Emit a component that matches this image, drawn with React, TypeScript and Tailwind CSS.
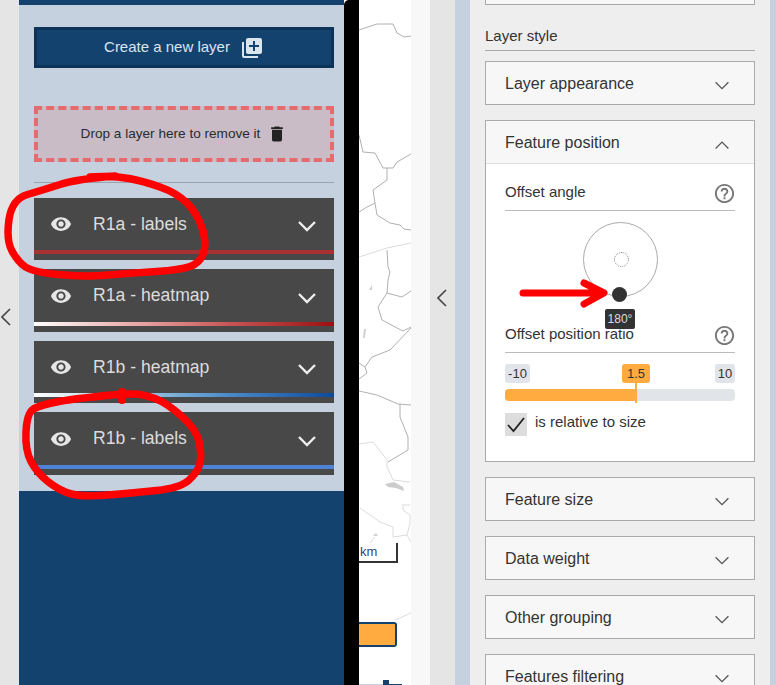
import React from 'react';
import { MdLibraryAdd, MdDelete, MdVisibility, MdHelpOutline } from 'react-icons/md';

type Pt = [number, number];

// midpoint smoothing so hand-drawn marks don't look like polygons
const smooth = (pts: Pt[]) => {
  let d = `M${pts[0][0]} ${pts[0][1]}`;
  for (let i = 1; i < pts.length - 1; i++) {
    const mx = (pts[i][0] + pts[i + 1][0]) / 2;
    const my = (pts[i][1] + pts[i + 1][1]) / 2;
    d += ` Q${pts[i][0]} ${pts[i][1]} ${mx} ${my}`;
  }
  const last = pts[pts.length - 1];
  return `${d} L${last[0]} ${last[1]}`;
};

const loopTop: Pt[] = [
  [115, 176], [77, 179], [43, 190], [12, 199], [6, 240], [18, 262], [33, 272], [83, 277], [133, 273], [180, 270],
  [200, 263], [207, 243], [197, 213], [177, 193], [143, 181], [115, 176], [90, 177],
];
const loopBottom: Pt[] = [
  [123, 394], [78, 398], [40, 405], [27, 413], [25, 450], [37, 473], [60, 491], [83, 497], [133, 493], [180, 488],
  [197, 473], [202, 457], [197, 430], [167, 403], [143, 394], [123, 394], [100, 396],
];

const borders = [
  'M359 30 L368 27 L377 24 L393 24 L397 33 L404 37 L411 36',
  'M359 135 L363 152 L375 153 L383 168 L393 168 L397 162 L411 154',
  'M387 168 L387 180 L373 190 L375 203 L367 207 L359 212',
  'M375 203 L377 215 L390 223 L400 225 L404 229 L411 230',
  'M387 250 L388 267 L390 272 L388 280 L387 293 L378 307 L382 320 L397 328 L403 331 L411 327',
  'M387 293 L402 297 L411 291',
  'M411 328 L390 350 L372 357 L365 367 L359 363 M365 367 L367 373 L359 379',
  'M359 391 L377 395 L398 404 L411 405',
  'M400 404 L400 417 L408 437 L408 450 L388 462',
];
const faintBorders = [
  'M359 257 L387 248 L411 243',
  'M359 444 L373 442 L387 460 L387 467 L393 480 L410 482',
  'M402 505 L410 505 M403 505 L403 510 L410 515 L410 523 L407 535 L411 542',
  'M360 508 L380 522 L393 527 L393 537 L407 535',
  'M375 537 L370 543 M395 620 L411 613',
];

const Chevron = ({ up, className }: { up?: boolean; className?: string }) => (
  <svg viewBox="0 0 20 12" fill="none" stroke="currentColor" className={className}>
    <path d={up ? 'M2 11 L10 3 L18 11' : 'M2 2 L10 10 L18 2'} />
  </svg>
);

const SideChevron = () => (
  <svg viewBox="0 0 10 18" fill="none" stroke="#444" strokeWidth="1.6" className="w-[10px] h-[18px]">
    <path d="M9 1 L1 9 L9 17" />
  </svg>
);

const Layer = ({ name, strip, tall }: { name: string; strip: string; tall?: boolean }) => (
  <div className={`bg-[#484848] flex flex-col ${tall ? 'h-[63px]' : 'h-[62px]'}`}>
    <div className={`flex items-center pl-[16px] pr-[17px] ${tall ? 'h-[53px]' : 'h-[52px]'}`}>
      <MdVisibility className="w-[22px] h-[22px] text-[#e6e6e6]" />
      <span className="ml-[21px] text-[17.6px] text-[#dcdcdc] flex-1">{name}</span>
      <Chevron className="w-[20px] h-[12px] text-[#eeeeee] [stroke-width:2.4] mt-[4px]" />
    </div>
    <div className={`h-[4px] ${strip}`} />
  </div>
);

const Section = ({ title }: { title: string }) => (
  <div className="h-[44px] shrink-0 bg-[#f7f7f7] border border-[#aaaaaa] flex items-center pl-[19px] pr-[24px] text-[16px] text-[#333333]">
    <span className="flex-1 pt-[2px]">{title}</span>
    <Chevron className="w-[16px] h-[11px] text-[#555555] [stroke-width:1.6] mt-[4px]" />
  </div>
);

const FieldLabel = ({ text }: { text: string }) => (
  <div className="flex items-center justify-between border-b border-[#bbbbbb] h-[28px] text-[15px] text-[#333333]">
    <span className="-mt-[8px]">{text}</span>
    <MdHelpOutline className="w-[23px] h-[23px] text-[#777777] mb-[6px] -mr-[1px]" />
  </div>
);

export default function App() {
  return (
    <div className="relative w-[776px] h-[685px] overflow-hidden flex font-['Liberation_Sans',Arial,sans-serif] bg-white">
      <div className="w-[19px] shrink-0 bg-[#e5e5e5] flex items-center">
        <div className="mt-[-52px] ml-[1px]"><SideChevron /></div>
      </div>

      {/* layers panel */}
      <div className="w-[325px] shrink-0 bg-[#c5d1de] flex flex-col">
        <div className="h-[5px] bg-[#13426f]" />
        <div className="pl-[15px] pr-[10px] pt-[22px] flex flex-col">
          <div className="h-[41px] bg-[#13426f] border-[3px] border-[#0e3358] flex items-center justify-center text-[15px] text-[#dbe5ee]">
            <span>Create a new layer</span>
            <MdLibraryAdd className="w-[24px] h-[24px] ml-[10px] text-[#dbe5ee]" />
          </div>
          <div className="mt-[38px] h-[56px] bg-[#c9bcc6] border-[4px] border-dashed border-[#e56b6f] flex items-center justify-center text-[13.6px] text-[#2b2b2b]">
            <span>Drop a layer here to remove it</span>
            <MdDelete className="w-[20px] h-[20px] ml-[7px] text-[#222222]" />
          </div>
          <div className="mt-[20px] border-t border-[#98a3ae]" />
          <div className="mt-[15px] flex flex-col gap-[9px]">
            <Layer name="R1a - labels" strip="bg-[#a83232]" />
            <Layer name="R1a - heatmap" tall strip="bg-[linear-gradient(90deg,#ffffff,#e8a5a5_35%,#c85555_65%,#9b1010)]" />
            <Layer name="R1b - heatmap" strip="bg-[linear-gradient(90deg,#ffffff,#9cc6e2_35%,#4a8ac8_65%,#0d4a9c)]" />
            <Layer name="R1b - labels" tall strip="bg-[#4d82d6]" />
          </div>
        </div>
        <div className="mt-[16px] flex-1 bg-[#13426f]" />
      </div>

      <div className="w-[15px] shrink-0 bg-black rounded-tl-[5px]" />

      {/* map */}
      <div className="relative w-[52px] shrink-0 overflow-hidden bg-white">
        <svg viewBox="359 0 52 685" fill="none" className="absolute inset-0 w-[52px] h-[685px]">
          {borders.map((d, i) => <path key={i} d={d} stroke="#b0b0b0" strokeWidth="1" />)}
          {faintBorders.map((d, i) => <path key={i} d={d} stroke="#dcdcdc" strokeWidth="1" />)}
          <path d="M385 484 L394 482 L403 487 L404 491 L396 488 L388 487 Z" fill="#cccccc" />
          <path d="M369 290 L372 285 L372 290 Z M363 338 L364 329 L366 329 L365 338 Z M373 536 L376 533 L378 536 Z" fill="#d0d0d0" />
        </svg>
        <div className="absolute left-0 top-[543px] w-[39px] h-[20px] border-r-2 border-b-2 border-[#333333] text-[13px] text-[#1f4b7a] pl-[1px] leading-[18px]">km</div>
        <div className="absolute left-0 top-[622px] w-[38px] h-[25px] bg-[#ffab40] border-2 border-l-0 border-[#13426f] rounded-r-[3px]" />
        <div className="absolute left-0 top-[684px] w-[24px] h-[1px] bg-[#c5d1de]" />
        <div className="absolute left-[24px] top-[680px] w-[6px] h-[5px] bg-[#13426f]" />
        <div className="absolute left-[30px] top-[684px] w-[13px] h-[1px] bg-[#13426f]" />
      </div>
      <div className="w-[19px] shrink-0 bg-[#f8f8f8]" />

      <div className="w-[25px] shrink-0 bg-[#e5e5e5] flex items-center justify-center">
        <div className="mt-[-89px] mr-[2px]"><SideChevron /></div>
      </div>
      <div className="w-[15px] shrink-0 bg-[#c5d1de]" />

      {/* style panel */}
      <div className="w-[300px] shrink-0 bg-[#eeeeee] px-[15px] flex flex-col">
        <div className="h-[5px] shrink-0 bg-[#f7f7f7] border border-t-0 border-[#aaaaaa]" />
        <div className="mt-[22px] h-[24px] shrink-0 border-b border-[#aaaaaa] text-[15px] text-[#333333] leading-[18px]">Layer style</div>
        <div className="mt-[10px]"><Section title="Layer appearance" /></div>

        <div className="mt-[15px] h-[342px] shrink-0 bg-white border border-[#aaaaaa] flex flex-col">
          <div className="h-[43px] shrink-0 bg-[#f7f7f7] border-b border-[#dddddd] flex items-center pl-[19px] pr-[24px] text-[16px] text-[#333333]">
            <span className="flex-1 pt-[2px]">Feature position</span>
            <Chevron up className="w-[16px] h-[11px] text-[#555555] [stroke-width:1.6] mt-[4px]" />
          </div>
          <div className="px-[19px] pt-[19px]">
            <FieldLabel text="Offset angle" />
            <div className="relative h-[114px]">
              <div className="absolute left-[78px] top-[11px] w-[75px] h-[75px] rounded-full border border-[#aaaaaa]" />
              <div className="absolute left-[109px] top-[41px] w-[15px] h-[15px] rounded-full border border-dotted border-[#888888]" />
              <div className="absolute left-[107px] top-[76px] w-[15px] h-[15px] rounded-full bg-[#333333]" />
              <div className="absolute left-[100px] top-[98px] w-[30px] h-[20px] z-10 rounded-[2px] bg-[#333333] text-[12px] text-[#dddddd] flex items-center justify-center">180°</div>
            </div>
            <FieldLabel text="Offset position ratio" />
            <div className="relative h-[50px] mt-[11px]">
              <div className="absolute left-0 top-0 h-[19px] w-[25px] rounded-[3px] bg-[#e1e4e8] text-[13px] text-[#333333] flex items-center justify-center">-10</div>
              <div className="absolute left-[117px] top-0 h-[19px] w-[28px] rounded-[3px] bg-[#ffab40] text-[13px] text-[#333333] flex items-center justify-center">1.5</div>
              <div className="absolute right-0 top-0 h-[19px] w-[20px] rounded-[3px] bg-[#e1e4e8] text-[13px] text-[#333333] flex items-center justify-center">10</div>
              <div className="absolute left-0 right-0 top-[25px] h-[12px] rounded-[4px] bg-[#e1e4e8] overflow-hidden">
                <div className="h-full w-[131px] bg-[#ffab40]" />
              </div>
              <div className="absolute left-[130px] top-[19px] w-[2px] h-[20px] bg-[#ffab40]" />
            </div>
            <div className="flex items-center mt-[-1px]">
              <div className="w-[22px] h-[23px] bg-[#dddddd] flex items-center justify-center">
                <svg viewBox="0 0 18 16" fill="none" stroke="#222222" strokeWidth="1.8" className="w-[18px] h-[16px]">
                  <path d="M1 8 L6.5 14 L17 1" />
                </svg>
              </div>
              <span className="ml-[8px] text-[15px] text-[#333333] -mt-[5px]">is relative to size</span>
            </div>
          </div>
        </div>

        <div className="mt-[15px] flex flex-col gap-[15px]">
          <Section title="Feature size" />
          <Section title="Data weight" />
          <Section title="Other grouping" />
          <Section title="Features filtering" />
        </div>
      </div>
      <div className="w-[6px] shrink-0 bg-[#c5d1de]" />

      {/* red marks on top of the screenshot */}
      <svg viewBox="0 0 776 685" fill="none" stroke="#ff0000" strokeLinecap="round" strokeLinejoin="round" className="absolute inset-0 w-[776px] h-[685px] pointer-events-none z-20">
        <path d={smooth(loopTop)} strokeWidth="7.5" />
        <path d={smooth(loopBottom)} strokeWidth="7.5" />
        <path d="M122 392 L122 400" strokeWidth="8" />
        <path d="M523 293 L603 293 M584 283 L604 293 L584 304" strokeWidth="7" />
      </svg>
    </div>
  );
}
